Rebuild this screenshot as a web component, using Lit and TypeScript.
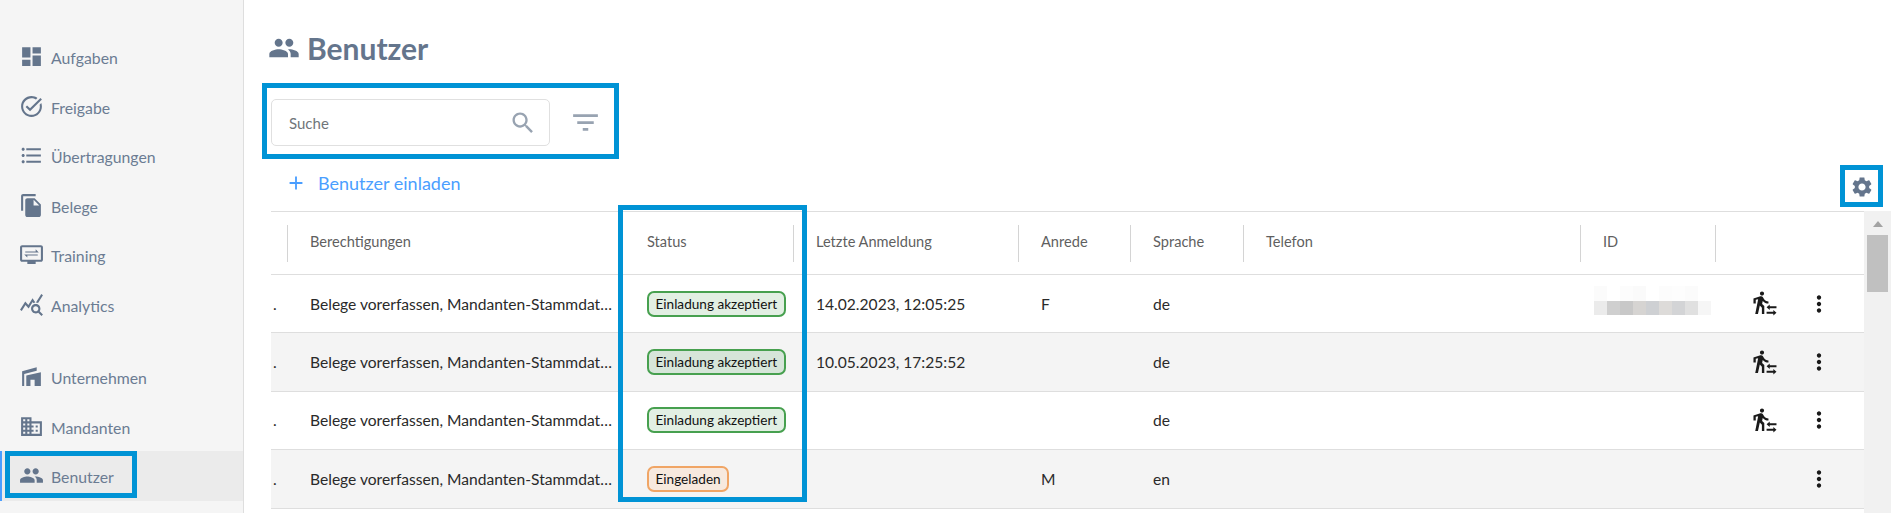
import { LitElement, html, css, svg } from "lit";
import { customElement } from "lit/decorators.js";

const P: Record<string, any> = {
  dashboard: svg`<path d="M3 13h8V3H3v10zm0 8h8v-6H3v6zm10 0h8V11h-8v10zm0-18v6h8V3h-8z"/>`,
  task: svg`<path d="M22 5.18L10.59 16.6l-4.24-4.24 1.41-1.41 2.83 2.83 10-10L22 5.18zm-2.21 5.04c.13.57.21 1.17.21 1.78 0 4.42-3.58 8-8 8s-8-3.58-8-8 3.58-8 8-8c1.58 0 3.04.46 4.28 1.25l1.44-1.44C16.1 2.67 14.13 2 12 2 6.48 2 2 6.48 2 12s4.48 10 10 10 10-4.48 10-10c0-1.19-.22-2.33-.6-3.39l-1.61 1.61z"/>`,
  list: svg`<path d="M4 10.5c-.83 0-1.5.67-1.5 1.5s.67 1.5 1.5 1.5 1.5-.67 1.5-1.5-.67-1.5-1.5-1.5zm0-6c-.83 0-1.5.67-1.5 1.5S3.17 7.5 4 7.5 5.5 6.83 5.5 6 4.83 4.5 4 4.5zm0 12c-.83 0-1.5.68-1.5 1.5s.68 1.5 1.5 1.5 1.5-.68 1.5-1.5-.67-1.5-1.5-1.5zM7 19h14v-2H7v2zm0-6h14v-2H7v2zm0-8v2h14V5H7z"/>`,
  copy: svg`<path d="M16 1H4c-1.1 0-2 .9-2 2v14h2V3h12V1zm-1 4l6 6v10c0 1.1-.9 2-2 2H7.99C6.89 23 6 22.1 6 21l.01-14c0-1.1.89-2 1.99-2h7zm-1 7h5.5L14 6.5V12z"/>`,
  training: svg`<path d="M21 3H3c-1.1 0-2 .9-2 2v12c0 1.1.9 2 2 2h5v2h8v-2h5c1.1 0 2-.9 2-2V5c0-1.1-.9-2-2-2zm0 14H3V5h18v12z"/><path d="M6 9h10V7l3 3H6zM18 13H8v2l-3-3h13z"/>`,
  analytics: svg`<path d="M19.88 18.47c.44-.7.7-1.51.7-2.39 0-2.49-2.01-4.5-4.5-4.5s-4.5 2.01-4.5 4.5 2.01 4.5 4.49 4.5c.88 0 1.7-.26 2.39-.7L21.58 23 23 21.58l-3.12-3.11zm-3.8.11c-1.38 0-2.5-1.12-2.5-2.5s1.12-2.5 2.5-2.5 2.5 1.12 2.5 2.5-1.12 2.5-2.5 2.5zm-.36-8.5c-.74.02-1.45.18-2.1.45l-.55-.83-3.8 6.18-3.01-3.52-3.63 5.81L1 17l5-8 3 3.5L13 6l2.72 4.08zm2.59.5c-.64-.28-1.33-.45-2.05-.49L21.38 2 23 3.18l-4.69 7.4z"/>`,
  company: svg`<path d="M3 7l14-4v3.5L5 9.5V21H3zM7 11l14-3v13h-6v-6H11v6H7z"/>`,
  domain: svg`<path d="M12 7V3H2v18h20V7H12zM6 19H4v-2h2v2zm0-4H4v-2h2v2zm0-4H4V9h2v2zm0-4H4V5h2v2zm4 12H8v-2h2v2zm0-4H8v-2h2v2zm0-4H8V9h2v2zm0-4H8V5h2v2zm10 12h-8v-2h2v-2h-2v-2h2v-2h-2V9h8v10zm-2-8h-2v2h2v-2zm0 4h-2v2h2v-2z"/>`,
  people: svg`<path d="M16 11c1.66 0 2.99-1.34 2.99-3S17.66 5 16 5c-1.66 0-3 1.34-3 3s1.34 3 3 3zm-8 0c1.66 0 2.99-1.34 2.99-3S9.66 5 8 5C6.34 5 5 6.34 5 8s1.34 3 3 3zm0 2c-2.33 0-7 1.17-7 3.5V19h14v-2.5c0-2.33-4.67-3.5-7-3.5zm8 0c-.29 0-.62.02-.97.05 1.16.84 1.97 1.97 1.97 3.45V19h6v-2.5c0-2.33-4.67-3.5-7-3.5z"/>`,
  search: svg`<path d="M15.5 14h-.79l-.28-.27C15.41 12.59 16 11.11 16 9.5 16 5.91 13.09 3 9.5 3S3 5.91 3 9.5 5.91 16 9.5 16c1.61 0 3.09-.59 4.23-1.57l.27.28v.79l5 4.99L20.49 19l-4.99-5zm-6 0C7.01 14 5 11.99 5 9.5S7.01 5 9.5 5 14 7.01 14 9.5 11.99 14 9.5 14z"/>`,
  filter: svg`<path d="M10 18h4v-2h-4v2zM3 6v2h18V6H3zm3 7h12v-2H6v2z"/>`,
  plus: svg`<path d="M19 13h-6v6h-2v-6H5v-2h6V5h2v6h6v2z"/>`,
  gear: svg`<path d="M19.14 12.94c.04-.3.06-.61.06-.94 0-.32-.02-.64-.07-.94l2.03-1.58c.18-.14.23-.41.12-.61l-1.92-3.32c-.12-.22-.37-.29-.59-.22l-2.39.96c-.5-.38-1.03-.7-1.62-.94l-.36-2.54c-.04-.24-.24-.41-.48-.41h-3.84c-.24 0-.43.17-.47.41l-.36 2.54c-.59.24-1.13.57-1.62.94l-2.39-.96c-.22-.08-.47 0-.59.22L2.74 8.87c-.12.21-.08.47.12.61l2.03 1.58c-.05.3-.09.63-.09.94s.02.64.07.94l-2.03 1.58c-.18.14-.23.41-.12.61l1.92 3.32c.12.22.37.29.59.22l2.39-.96c.5.38 1.03.7 1.62.94l.36 2.54c.05.24.24.41.48.41h3.84c.24 0 .44-.17.47-.41l.36-2.54c.59-.24 1.13-.56 1.62-.94l2.39.96c.22.08.47 0 .59-.22l1.92-3.32c.12-.22.07-.47-.12-.61l-2.01-1.58zM12 15.6c-1.98 0-3.6-1.62-3.6-3.6s1.62-3.6 3.6-3.6 3.6 1.62 3.6 3.6-1.62 3.6-3.6 3.6z"/>`,
  more: svg`<path d="M12 8c1.1 0 2-.9 2-2s-.9-2-2-2-2 .9-2 2 .9 2 2 2zm0 2c-1.1 0-2 .9-2 2s.9 2 2 2 2-.9 2-2-.9-2-2-2zm0 6c-1.1 0-2 .9-2 2s.9 2 2 2 2-.9 2-2-.9-2-2-2z"/>`,
  walk: svg`<path d="M9.6 4.4c1.1 0 2-.9 2-2s-.9-2-2-2-2 .9-2 2 .9 2 2 2zM5.9 7.8L3.1 22h2.6l1.8-8 2 2v6h2.3v-7.5l-2.1-2 .6-3c1.3 1.5 3.3 2.5 5.5 2.5v-2c-1.9 0-3.5-1-4.3-2.4l-1-1.6c-.4-.6-1-1-1.7-1-.3 0-.5.1-.8.1L1.4 7.2V12h2.2V8.5l2.3-.7z"/><path d="M17 13l-3 2.6 3 2.6v-1.7h6.5v-1.8H17zM20.5 18.3v1.7H14v1.8h6.5v1.7l3-2.6z"/>`,
};
const icon = (n: string, cls = "") => html`<svg class="ic ${cls}" viewBox="0 0 24 24" fill="currentColor">${P[n]}</svg>`;

const NAV1 = [["dashboard","Aufgaben"],["task","Freigabe"],["list","Übertragungen"],["copy","Belege"],["training","Training"],["analytics","Analytics"]];
const NAV2 = [["company","Unternehmen"],["domain","Mandanten"]];
const HEAD = ["", "Berechtigungen", "Status", "Letzte Anmeldung", "Anrede", "Sprache", "Telefon", "ID", ""];
const PERM = "Belege vorerfassen, Mandanten-Stammdat…";
const ROWS = [
  { s: "ok", st: "Einladung akzeptiert", d: "14.02.2023, 12:05:25", a: "F", l: "de", id: true, w: true },
  { s: "ok", st: "Einladung akzeptiert", d: "10.05.2023, 17:25:52", a: "", l: "de", id: false, w: true },
  { s: "ok", st: "Einladung akzeptiert", d: "", a: "", l: "de", id: false, w: true },
  { s: "inv", st: "Eingeladen", d: "", a: "M", l: "en", id: false, w: false },
];
const BLUR_TOP = ["#fbfbfb","#ffffff","#fcfcfc","#fafafa","#ffffff","#fcfcfc","#fdfdfd","#fbfbfb","#ffffff"];
const BLUR_BOT = ["#ebebeb","#cfcfcf","#c8c8c8","#d6d4d2","#ced0d3","#dddbd9","#d3d4d6","#e0e0e0","#f6f6f6"];

@customElement("app-root")
export class AppRoot extends LitElement {
  static styles = css`
    :host { display: block; position: relative; width: 1891px; height: 513px; overflow: hidden; background: #fff;
      font-family: Lato, "Open Sans", sans-serif; color: #6b7c93; }
    .ic { display: block; flex: none; }
    .page { display: flex; height: 513px; }
    .side { width: 243px; flex: none; background: #f5f5f5; border-right: 1px solid #dedede; padding-top: 32px; box-sizing: content-box; }
    .group { display: flex; flex-direction: column; }
    .group + .group { margin-top: 23.1px; }
    .nav { display: flex; align-items: center; height: 49.5px; padding-left: 19px; gap: 7px; font-size: 15.8px; color: #6b7c93; }
    .nav .ic { width: 25px; height: 25px; color: #64758c; }
    .nav.active { background: #ebebeb; box-shadow: inset 2px 0 0 #4a9eff; }
    .nav span { position: relative; top: 1px; }
    .main { flex: 1; min-width: 0; padding: 0 0 0 27px; display: flex; flex-direction: column; }
    h1 { margin: 0; height: 99px; display: flex; align-items: flex-start; gap: 7px; padding-top: 29px; box-sizing: border-box;
      font-size: 30px; line-height: 38px; font-weight: 700; color: #64758c; }
    h1 .ic { width: 32px; height: 32px; margin: 3px 0 0 -3px; }
    .tools { display: flex; align-items: center; gap: 19px; height: 47px; }
    .search { width: 279px; height: 47px; box-sizing: border-box; border: 1px solid #e0e0e0; border-radius: 5px; display: flex; align-items: center;
      justify-content: space-between; padding: 0 12px 0 17px; font-size: 15px; color: #70757a; }
    .search .ic { width: 28px; height: 28px; color: #98a3b1; }
    .filter { width: 33px; height: 33px; color: #98a3b1; }
    .action { display: flex; align-items: center; height: 65px; box-sizing: border-box; padding: 9px 17px 0 14px; gap: 11px; color: #4a9eff; font-size: 18px; }
    .action .ic { width: 22px; height: 22px; }
    .action .gear { margin: 7px 0 0 auto; width: 24px; height: 24px; color: #64758c; }
    .wrap { display: flex; flex: 1; min-height: 0; }
    .table { flex: 1; min-width: 0; border-top: 1px solid #dedede; }
    .row { display: grid; grid-template-columns: 16px 337px 169px 225px 112px 113px 337px 135px 149px; height: 58.4px; box-sizing: border-box;
      border-bottom: 1px solid #dedede; align-items: center; font-size: 15.6px; color: #2a2a2a; }
    .row.head { height: 63px; color: #5f5f5f; font-size: 14.6px; }
    .row.even { background: #f4f4f4; }
    .cell { padding-left: 23px; white-space: nowrap; min-width: 0; }
    .head .cell { height: 37px; line-height: 34px; border-left: 1px solid #d4d4d4; padding-left: 22px; }
    .head .cell.nob { border-left: 0; padding-left: 23px; }
    .row .lead { padding-left: 2px; overflow: hidden; }
    .badge { display: inline-block; font-size: 13.6px; line-height: 22px; height: 26px; box-sizing: border-box; padding: 0 6.5px; border-radius: 7px; border: 2px solid; color: #111; vertical-align: middle; }
    .badge.ok { border-color: #47a04f; background: #e2efe3; }
    .even .badge.ok { background: #d6e5d9; }
    .badge.inv { border-color: #f0a565; background: #f7e9de; }
    .blur { display: grid; grid-template-columns: repeat(9, 13px); grid-auto-rows: 14.5px; margin: 0 0 6px -9px; }
    .actions { display: flex; align-items: center; padding-left: 37px; gap: 0; }
    .actions .ic { color: #1a1a1a; }
    .actions .walk { width: 25px; height: 25px; }
    .actions .slot { width: 25px; height: 25px; flex: none; }
    .actions .more { width: 26px; height: 26px; margin-left: 29px; }
    .scroll { width: 27px; flex: none; background: #f1f1f1; display: flex; flex-direction: column; align-items: center; position: relative; }
    .arrow { margin-top: 10px; width: 0; height: 0; border-left: 5.5px solid transparent; border-right: 5.5px solid transparent; border-bottom: 6px solid #a3a3a3; }
    .thumb { margin-top: 8px; width: 21px; height: 57px; background: #c0c0c0; }
    .mark { position: absolute; box-sizing: border-box; border: 5px solid #0093d5; pointer-events: none; }
    .m1 { left: 5px; top: 451px; width: 132px; height: 47px; }
    .m2 { left: 262px; top: 83px; width: 357px; height: 76px; }
    .m3 { left: 618px; top: 205px; width: 189px; height: 297px; }
    .m4 { left: 1840px; top: 165px; width: 43px; height: 42px; }
  `;

  render() {
    return html`
      <div class="page">
        <aside class="side">
          <div class="group">${NAV1.map(([i, t]) => html`<div class="nav">${icon(i)}<span>${t}</span></div>`)}</div>
          <div class="group">
            ${NAV2.map(([i, t]) => html`<div class="nav">${icon(i)}<span>${t}</span></div>`)}
            <div class="nav active">${icon("people")}<span>Benutzer</span></div>
          </div>
        </aside>
        <main class="main">
          <h1>${icon("people")}Benutzer</h1>
          <div class="tools">
            <div class="search"><span>Suche</span>${icon("search")}</div>
            ${icon("filter", "filter")}
          </div>
          <div class="action">${icon("plus")}<span>Benutzer einladen</span>${icon("gear", "gear")}</div>
          <div class="wrap">
            <div class="table">
              <div class="row head">
                ${HEAD.map((h, i) => html`<div class="cell ${i === 0 || i === 2 ? "nob" : ""}">${h}</div>`)}
              </div>
              ${ROWS.map((r, n) => html`
                <div class="row ${n % 2 ? "even" : ""}">
                  <div class="cell lead">.</div>
                  <div class="cell perm">${PERM}</div>
                  <div class="cell"><span class="badge ${r.s}">${r.st}</span></div>
                  <div class="cell">${r.d}</div>
                  <div class="cell">${r.a}</div>
                  <div class="cell">${r.l}</div>
                  <div class="cell"></div>
                  <div class="cell">${r.id ? html`<div class="blur">${[...BLUR_TOP, ...BLUR_BOT].map((c) => html`<i style="background:${c}"></i>`)}</div>` : ""}</div>
                  <div class="actions">
                    ${r.w ? icon("walk", "walk") : html`<div class="slot"></div>`}
                    ${icon("more", "more")}
                  </div>
                </div>`)}
            </div>
            <div class="scroll"><div class="arrow"></div><div class="thumb"></div></div>
          </div>
        </main>
      </div>
      <div class="mark m1"></div>
      <div class="mark m2"></div>
      <div class="mark m3"></div>
      <div class="mark m4"></div>
    `;
  }
}
